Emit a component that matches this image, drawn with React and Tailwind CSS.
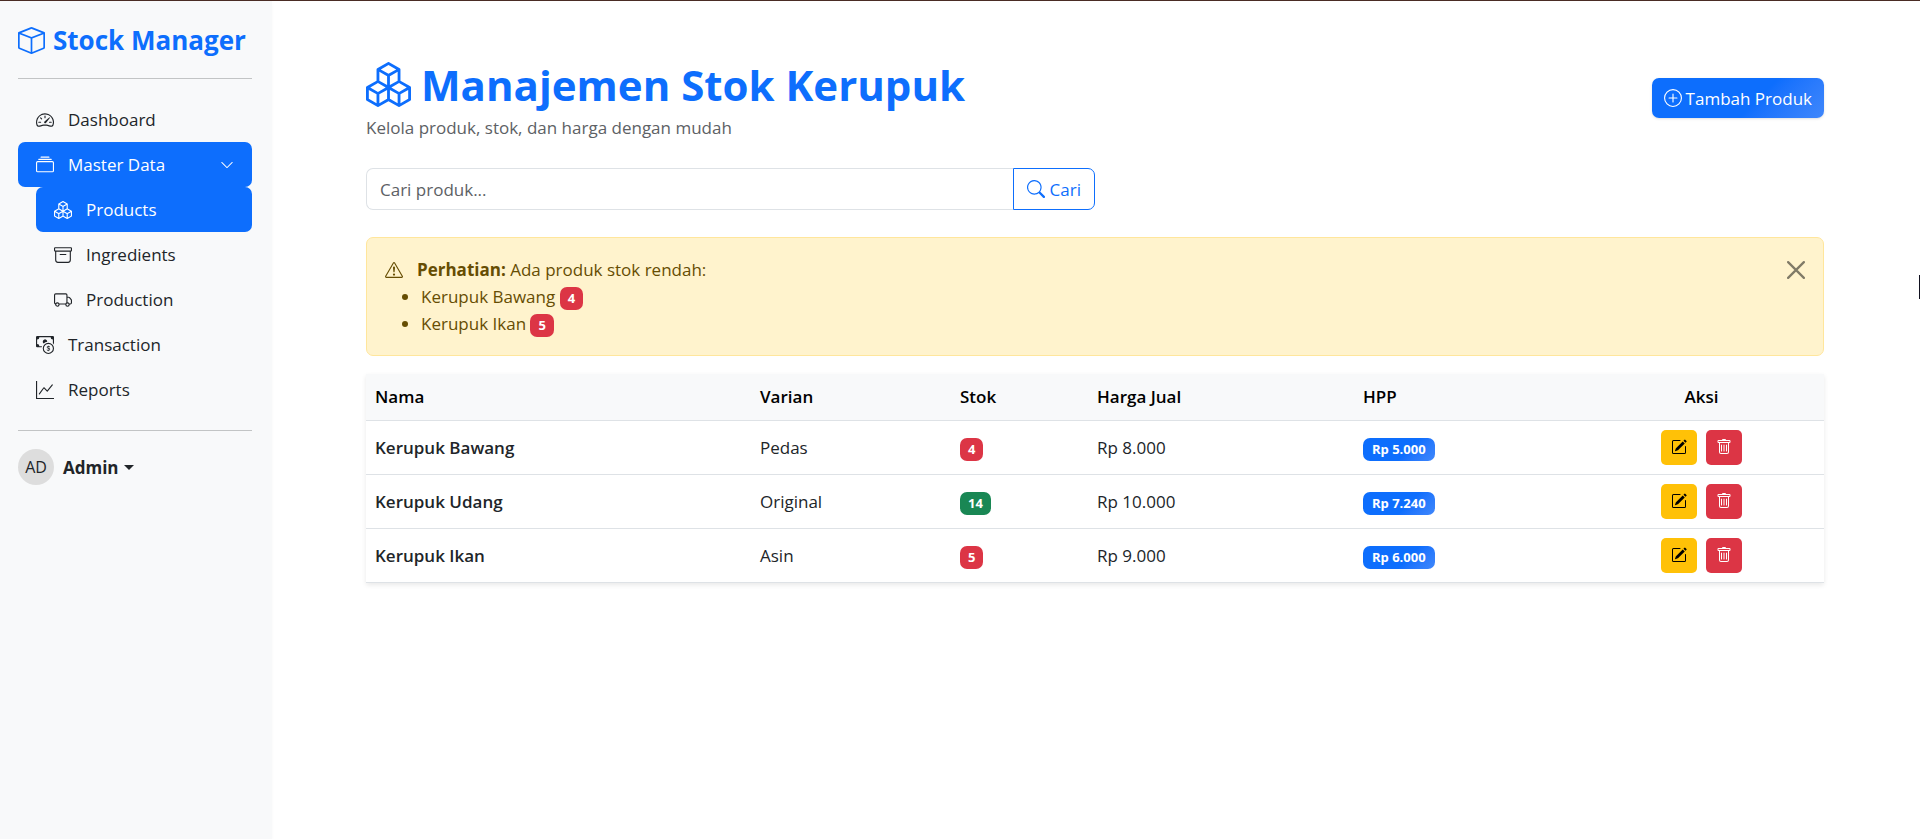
import React from "react";
import {
  BsArchive, BsBox, BsBoxes, BsCashCoin, BsChevronDown, BsCollection, BsExclamationTriangle,
  BsGraphUp, BsPencilSquare, BsPlusCircle, BsSearch, BsSpeedometer2, BsTrash, BsTruck,
} from "react-icons/bs";

const products = [
  { name: "Kerupuk Bawang", variant: "Pedas", stock: 4, price: "Rp 8.000", cost: "Rp 5.000" },
  { name: "Kerupuk Udang", variant: "Original", stock: 14, price: "Rp 10.000", cost: "Rp 7.240" },
  { name: "Kerupuk Ikan", variant: "Asin", stock: 5, price: "Rp 9.000", cost: "Rp 6.000" },
];

function NavItem({ icon: Icon, label, active, nested, expandable }) {
  return (
    <li className={nested ? "pl-[18px]" : ""}>
      <a
        href="#"
        className={`flex h-[45px] items-center rounded-[7px] px-[18px] ${active ? "bg-[#0d6efd] text-white" : "text-[#212529]"}`}
      >
        <Icon className="mr-[14px] size-[18px]" />
        <span>{label}</span>
        {expandable && <BsChevronDown className="ml-auto size-[14px]" />}
      </a>
    </li>
  );
}

function StockBadge({ value }) {
  return (
    <span
      className={`inline-block rounded-[7px] px-2 text-[13px] leading-[23px] font-bold text-white ${value > 5 ? "bg-[#198754]" : "bg-[#dc3545]"}`}
    >
      {value}
    </span>
  );
}

function Sidebar() {
  return (
    <aside className="w-[272px] shrink-0 bg-[#f8f9fa] pt-[17px] pr-5 pl-[18px] shadow-[0_2px_4px_rgba(0,0,0,0.03)]">
      <a href="#" className="flex h-[45px] items-center gap-2 text-[26px] font-bold text-[#0d6efd]">
        <BsBox className="size-[27px]" />
        <span>Stock Manager</span>
      </a>
      <hr className="mt-[15px] mb-[18px] border-[#c2c4c5]" />
      <nav>
        <ul>
          <NavItem icon={BsSpeedometer2} label="Dashboard" />
          <NavItem icon={BsCollection} label="Master Data" active expandable />
          <NavItem icon={BsBoxes} label="Products" active nested />
          <NavItem icon={BsArchive} label="Ingredients" nested />
          <NavItem icon={BsTruck} label="Production" nested />
          <NavItem icon={BsCashCoin} label="Transaction" />
          <NavItem icon={BsGraphUp} label="Reports" />
        </ul>
      </nav>
      <hr className="my-[18px] border-[#c2c4c5]" />
      <button type="button" className="flex items-center text-[#212529]">
        <span className="mr-[9px] flex size-9 items-center justify-center rounded-full bg-[#ddd] text-[16px]">AD</span>
        <span className="font-bold">Admin</span>
        <span className="ml-[5px] border-x-[5px] border-t-[5px] border-x-transparent border-t-[#212529]" />
      </button>
    </aside>
  );
}

export default function App() {
  return (
    <div className="relative flex min-h-screen flex-col border-t border-[#4a2c24] bg-white font-['Segoe_UI','Open_Sans','Noto_Sans',sans-serif] text-[17px] leading-[27px] text-[#212529]">
      <div aria-hidden="true" className="absolute top-[274px] right-0 h-6 w-px bg-[#11111f]" />
      <div className="flex flex-1">
        <Sidebar />
        <main className="min-w-0 flex-1 pt-[54px] pr-[38px] pl-9">
          <div className="mx-auto max-w-[1458px]">
            <header className="flex items-center justify-between">
              <div>
                <h1 className="flex items-center gap-[10px] text-[42px] leading-[59px] font-bold text-[#0d6efd]">
                  <BsBoxes className="size-[45px]" />
                  <span>Manajemen Stok Kerupuk</span>
                </h1>
                <p className="text-[#5d6165]">Kelola produk, stok, dan harga dengan mudah</p>
              </div>
              <button
                type="button"
                className="flex h-10 items-center gap-1 rounded-[7px] bg-linear-135 from-[#0d6efd] from-60% to-[#3f87fb] px-3 text-white shadow-sm"
              >
                <BsPlusCircle className="size-[18px]" />
                Tambah Produk
              </button>
            </header>

            <form className="mt-[27px] flex w-1/2" onSubmit={(e) => e.preventDefault()}>
              <input
                type="text"
                aria-label="Cari produk"
                placeholder="Cari produk..."
                className="h-[42px] min-w-0 flex-1 rounded-l-[7px] border border-r-0 border-[#dee2e6] px-[13px] placeholder:text-[#5d6165]"
              />
              <button type="submit" className="flex h-[42px] items-center gap-[5px] rounded-r-[7px] border border-[#0d6efd] px-[13px] text-[#0d6efd]">
                <BsSearch className="size-[18px]" />
                Cari
              </button>
            </form>

            <section role="alert" className="mt-[27px] flex items-start justify-between rounded-[7px] border border-[#ffe69c] bg-[#fff3cd] p-[18px] text-[#664d03]">
              <div>
                <p className="flex items-center">
                  <BsExclamationTriangle className="mr-[14px] size-[18px]" />
                  <span><strong>Perhatian:</strong> Ada produk stok rendah:</span>
                </p>
                <ul className="list-disc pl-9">
                  {products.filter((p) => p.stock <= 5).map((p) => (
                    <li key={p.name}>{p.name} <StockBadge value={p.stock} /></li>
                  ))}
                </ul>
              </div>
              <button type="button" aria-label="Tutup" className="mt-[5px] text-[#807a67]">
                <svg viewBox="0 0 16 16" className="size-[18px]" fill="none" stroke="currentColor" strokeWidth="2" strokeLinecap="round">
                  <path d="M1 1L15 15M15 1L1 15" />
                </svg>
              </button>
            </section>

            <table className="mt-[18px] w-full table-fixed border-collapse text-left shadow-[0_2px_5px_rgba(0,0,0,0.09)]">
              <colgroup>
                <col className="w-[385px]" />
                <col className="w-[200px]" />
                <col className="w-[137px]" />
                <col className="w-[266px]" />
                <col className="w-[225px]" />
                <col />
              </colgroup>
              <thead className="bg-[#f8f9fa] text-black">
                <tr className="h-[46px] border-b border-[#dee2e6]">
                  <th className="px-[9px] font-semibold">Nama</th>
                  <th className="px-[9px] font-semibold">Varian</th>
                  <th className="px-[9px] font-semibold">Stok</th>
                  <th className="px-[9px] font-semibold">Harga Jual</th>
                  <th className="px-[9px] font-semibold">HPP</th>
                  <th className="px-[9px] text-center font-semibold">Aksi</th>
                </tr>
              </thead>
              <tbody>
                {products.map((p) => (
                  <tr key={p.name} className="border-b border-[#dee2e6]">
                    <td className="px-[9px] font-semibold">{p.name}</td>
                    <td className="px-[9px]">{p.variant}</td>
                    <td className="px-[9px]"><StockBadge value={p.stock} /></td>
                    <td className="px-[9px]">{p.price}</td>
                    <td className="px-[9px]">
                      <span className="inline-block rounded-[7px] bg-linear-135 from-[#0d6efd] from-60% to-[#3f87fb] px-[9px] text-[13px] leading-[23px] font-bold text-white">
                        {p.cost}
                      </span>
                    </td>
                    <td className="px-[9px] py-[9px]">
                      <div className="flex justify-center gap-[9px]">
                        <button type="button" aria-label={`Edit ${p.name}`} className="flex h-[35px] w-9 items-center justify-center rounded-[5px] bg-[#ffc107] text-black">
                          <BsPencilSquare className="size-4" />
                        </button>
                        <button type="button" aria-label={`Hapus ${p.name}`} className="flex h-[35px] w-9 items-center justify-center rounded-[5px] bg-[#dc3545] text-white">
                          <BsTrash className="size-4" />
                        </button>
                      </div>
                    </td>
                  </tr>
                ))}
              </tbody>
            </table>
          </div>
        </main>
      </div>
    </div>
  );
}
